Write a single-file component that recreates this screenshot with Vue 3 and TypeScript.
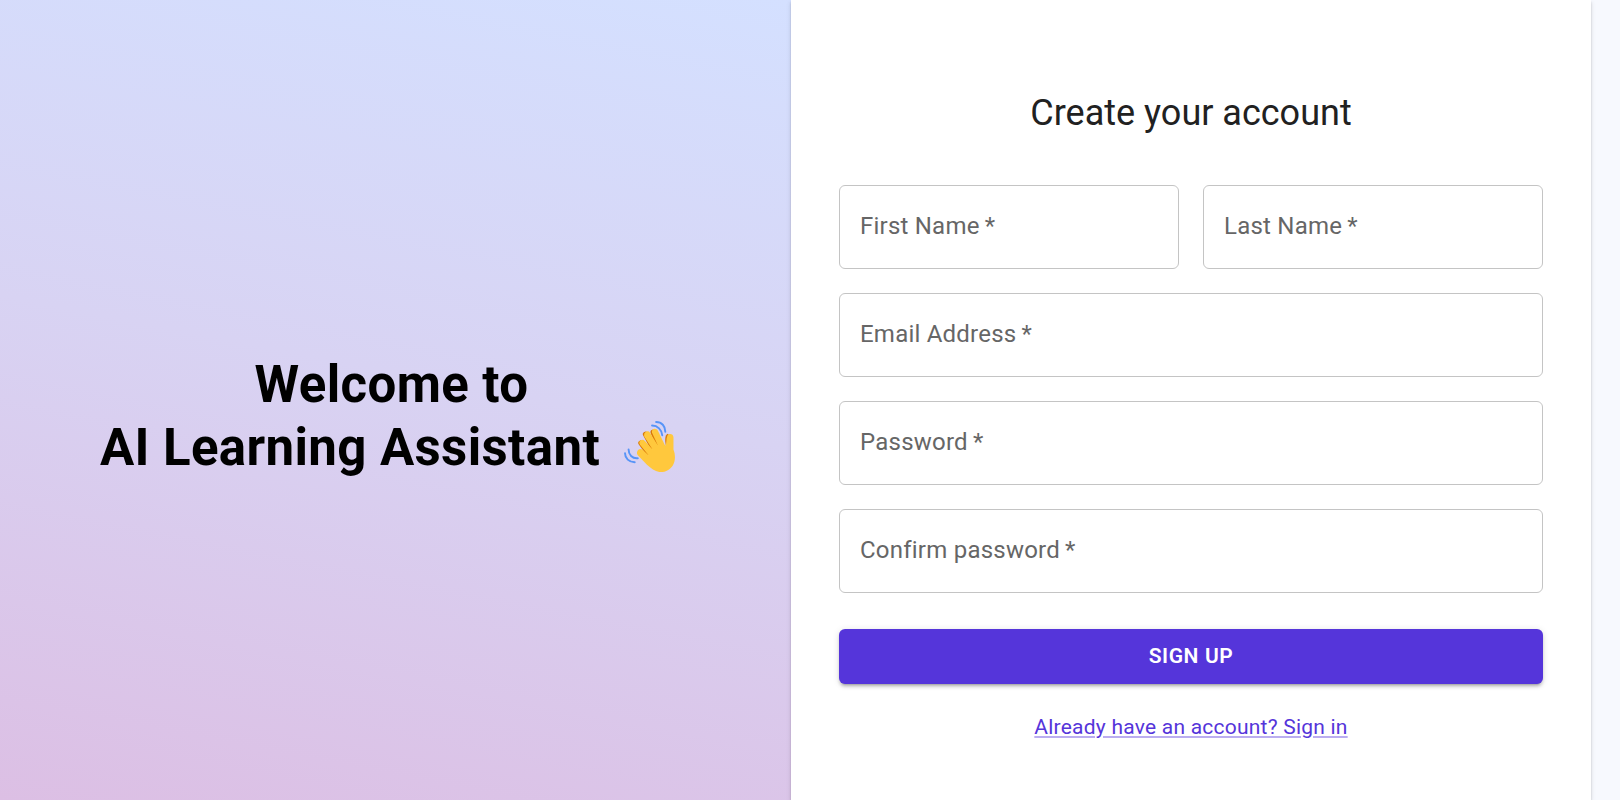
<script setup lang="ts">
import { reactive } from 'vue'

interface Field {
  id: string
  label: string
  type: string
  autocomplete: string
  half?: boolean
}

const fields: Field[] = [
  { id: 'firstName', label: 'First Name', type: 'text', autocomplete: 'given-name', half: true },
  { id: 'lastName', label: 'Last Name', type: 'text', autocomplete: 'family-name', half: true },
  { id: 'email', label: 'Email Address', type: 'email', autocomplete: 'email' },
  { id: 'password', label: 'Password', type: 'password', autocomplete: 'new-password' },
  { id: 'confirmPassword', label: 'Confirm password', type: 'password', autocomplete: 'new-password' },
]

const values = reactive<Record<string, string>>({
  firstName: '',
  lastName: '',
  email: '',
  password: '',
  confirmPassword: '',
})
</script>

<template>
  <div class="page">
    <section class="welcome">
      <h1 class="welcome-title">
        <span>Welcome to</span>
        <span class="brand">
          AI Learning Assistant
          <svg class="wave" viewBox="0 0 50 50" role="img" aria-label="Waving hand">
            <g fill="none" stroke="#5794f7" stroke-width="1.900" stroke-linecap="round">
              <path d="M27.500 4.500C33 4.500 37 8.500 37.500 14" />
              <path d="M31.500 1C37 1 40.500 5 40.500 10.500" />
              <path d="M4.500 28C4.500 33 8 37 13.500 36.500" />
              <path d="M1 31.500C1 36.500 5 40.500 10.500 40.500" />
            </g>
            <g fill="none" stroke="#d97a08" stroke-width="5" stroke-linecap="round">
              <path d="M16.500 21.500L23.500 31" />
              <path d="M21 13L27.500 25" />
              <path d="M28.500 11L32.500 21.500" />
            </g>
            <path fill="#d97a08" d="M41 24C40 19 40 13.500 43 12.500L45 15V28Z" />
            <path
              fill="#ffc83d"
              d="M13 30C13.500 27.500 16.500 26.500 18.500 28.500L24.500 34L15.500 23C13.500 19.500 18 16.500 20.500 19.500L28 28L20 15.500C18.500 11.500 23 8 25.500 11.500L33.500 24.500L27.500 11.500C26.500 7.500 31.500 6 33.500 10L40.500 24.500C42 22 41 18 42.500 14.500C44 11.500 48.500 12.500 48.500 16V28C52 37 49 46 41.500 49C34 52 28.500 48.500 22.500 43L14 34C12.500 32.500 12.500 31 13 30Z"
            />
          </svg>
        </span>
      </h1>
    </section>

    <main class="panel">
      <h2 class="panel-title">Create your account</h2>
      <form class="form" @submit.prevent>
        <div class="fields">
          <div
            v-for="field in fields"
            :key="field.id"
            class="field"
            :class="{ half: field.half, filled: values[field.id] !== '' }"
          >
            <label :for="field.id">{{ field.label }}&thinsp;*</label>
            <input
              :id="field.id"
              v-model="values[field.id]"
              :type="field.type"
              :autocomplete="field.autocomplete"
              required
            />
          </div>
        </div>
        <button class="submit" type="submit">Sign up</button>
        <a class="signin" href="#signin">Already have an account? Sign in</a>
      </form>
    </main>
  </div>
</template>

<style>
body {
  margin: 0;
  background: #f7f9fe;
}
</style>

<style scoped>
.page {
  display: flex;
  min-height: 100vh;
  padding-right: 29px;
  box-sizing: border-box;
  font-family: Roboto, "Liberation Sans", sans-serif;
  color: #212121;
}

.welcome {
  flex: 1;
  min-width: 0;
  display: flex;
  align-items: center;
  justify-content: center;
  padding: 56px 24px 24px;
  background: linear-gradient(191deg, #d4e0ff 0%, #d8d3f3 47%, #dcbfe4 100%);
}

.welcome-title {
  display: flex;
  flex-direction: column;
  align-items: center;
  margin: 0;
  padding-right: 8px;
  text-align: center;
  font-size: 51px;
  line-height: 63px;
  font-weight: 700;
  letter-spacing: 0.00735em;
  color: #000;
}

.brand {
  display: flex;
  align-items: center;
  gap: 24px;
  padding-right: 8px;
}

.wave {
  flex: none;
  width: 51px;
  height: 51px;
  margin-bottom: 2px;
}

.panel {
  flex: 0 1 800px;
  min-width: 0;
  box-sizing: border-box;
  display: flex;
  flex-direction: column;
  padding: 89px 48px 48px;
  background: #fff;
  box-shadow:
    0 3px 2px -2px rgba(0, 0, 0, 0.2),
    0 2px 2px rgba(0, 0, 0, 0.14),
    0 2px 5px rgba(0, 0, 0, 0.12);
}

.panel-title {
  margin: 0 0 48px;
  text-align: center;
  font-size: 36px;
  line-height: 48px;
  font-weight: 400;
}

.form {
  display: flex;
  flex-direction: column;
}

.fields {
  display: grid;
  grid-template-columns: 1fr 1fr;
  gap: 24px;
}

.field {
  position: relative;
  grid-column: 1 / -1;
}

.field.half {
  grid-column: auto;
}

.field label {
  position: absolute;
  left: 21px;
  top: 24px;
  font-size: 24px;
  line-height: 34px;
  letter-spacing: 0.00938em;
  color: #666;
  pointer-events: none;
}

.field:focus-within label,
.field.filled label {
  top: -12px;
  left: 18px;
  padding: 0 4px;
  background: #fff;
  font-size: 18px;
  line-height: 24px;
}

.field input {
  display: block;
  width: 100%;
  height: 84px;
  box-sizing: border-box;
  padding: 0 21px;
  border: 1px solid #c4c4c4;
  border-radius: 6px;
  outline: none;
  background: transparent;
  font: inherit;
  font-size: 24px;
  color: inherit;
}

.field input:focus {
  border-color: #5535da;
}

.submit {
  margin: 36px 0 28px;
  padding: 9px 24px;
  border: 0;
  border-radius: 6px;
  background: #5535da;
  color: #fff;
  font-family: inherit;
  font-size: 21px;
  line-height: 37px;
  font-weight: 600;
  letter-spacing: 0.02857em;
  text-transform: uppercase;
  cursor: pointer;
  box-shadow:
    0 4px 2px -3px rgba(0, 0, 0, 0.2),
    0 3px 3px rgba(0, 0, 0, 0.14),
    0 1px 7px rgba(0, 0, 0, 0.12);
}

.signin {
  align-self: center;
  font-size: 21px;
  line-height: 30px;
  letter-spacing: 0.01071em;
  color: #5535da;
  text-decoration: underline;
  text-decoration-color: rgba(85, 53, 218, 0.4);
}
</style>
